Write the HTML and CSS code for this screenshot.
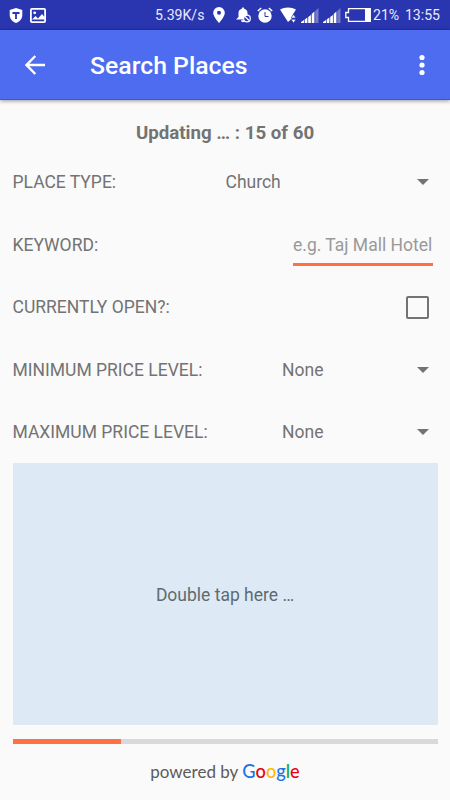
FILE: index.html
```html
<!DOCTYPE html>
<html lang="en">
<head>
    <meta charset="UTF-8">
    <meta name="viewport" content="width=device-width, initial-scale=1.0">
    <title>Search Places</title>
    <link rel="stylesheet" href="styles.css">
</head>
<body>
    <div class="status-bar">
        <div class="notifications">
            <svg width="14" height="15" viewBox="0 0 14 15">
                <path d="M7 0L13.3 2v5c0 4-2.8 6.8-6.3 8C3.500 13.800.7 11 .7 7V2z" fill="#fff"/>
                <path d="M3.500 5h7M7 5v6" stroke="#2a35b0" stroke-width="1.800" fill="none"/>
            </svg>
            <svg width="16" height="15" viewBox="0 0 16 15">
                <rect x=".9" y=".9" width="14.200" height="13.200" rx="1" stroke="#fff" stroke-width="1.800" fill="none"/>
                <circle cx="4.700" cy="4.800" r="1.400" fill="#fff"/>
                <path d="M2 11.500l3.500-3.500 2.500 2.500L12 6l2.500 3v2.500z" fill="#fff"/>
            </svg>
        </div>
        <span class="speed">5.39K/s</span>
        <svg class="pin" width="12" height="16" viewBox="0 0 12 16">
            <path d="M6 0a5.800 5.800 0 0 0-5.800 5.800C.2 10 6 16 6 16s5.800-6 5.800-10.200A5.800 5.800 0 0 0 6 0z" fill="#fff"/>
            <circle cx="6" cy="5.800" r="2" fill="#2a35b0"/>
        </svg>
        <svg class="bell" width="15" height="16" viewBox="0 0 15 16">
            <path d="M7 0.500c.8 0 1.200.5 1.200 1.200C10.500 2.300 11.500 4 11.500 6v4l1.500 2.500H0L2.500 10V6c0-2 1-3.700 3.300-4.300C5.800 1 6.200.5 7 .5zM5 13.200h4a2 2 0 0 1-4 0z" fill="#fff"/>
            <circle cx="11" cy="11.500" r="3.300" fill="#2a35b0" stroke="#fff" stroke-width="1.200"/>
            <path d="M9 9.500l4 4" stroke="#fff" stroke-width="1.200"/>
        </svg>
        <svg class="alarm" width="16" height="16" viewBox="0 0 16 16">
            <circle cx="8" cy="9" r="6.700" fill="#fff"/>
            <path d="M.8 4L4.200 1M15.200 4L11.800 1" stroke="#fff" stroke-width="1.500"/>
            <path d="M8 5v4.500h3.500" stroke="#2a35b0" stroke-width="1" fill="none"/>
        </svg>
        <svg class="wifi" width="17" height="16" viewBox="0 0 17 16">
            <path d="M0 2.500C4.500-.3 11.500-.3 16 2.500L12.500 8v3L8 15z" fill="#fff"/>
            <path d="M11 11l2.500-3.500L16 11zM11 12.300h5L13.500 16z" fill="#fff" stroke="#2a35b0" stroke-width=".6"/>
        </svg>
        <svg class="signal" width="18" height="15" viewBox="0 0 18 15">
            <path d="M0 15v-1l3-2v3zM3.700 15v-3.500l2.700-2V15zM7.200 15V9l2.700-2v8zM10.700 15V6l2.700-2.500V15z" fill="#fff"/>
            <path d="M14.200 15V3L17.500 0v15z" fill="#7379cb"/>
        </svg>
        <svg class="signal" width="18" height="15" viewBox="0 0 18 15">
            <path d="M0 15v-1l3-2v3zM3.700 15v-3.500l2.700-2V15zM7.200 15V9l2.700-2v8zM10.700 15V6l2.700-2.500V15z" fill="#fff"/>
            <path d="M14.200 15V3L17.500 0v15z" fill="#7379cb"/>
        </svg>
        <svg class="battery" width="26" height="14" viewBox="0 0 26 14">
            <path d="M3.500.7h21.800v12.600H3.500V9.500H.8v-5h2.700z" stroke="#fff" stroke-width="1.300" fill="none"/>
            <path d="M20 1h5v12h-5z" fill="#fff"/>
        </svg>
        <span class="percent">21%</span>
        <span class="clock">13:55</span>
    </div>

    <header class="toolbar">
        <svg class="back" width="20" height="20" viewBox="0 0 20 20">
            <path d="M20 10H1.800M10.300 1L1.500 10l8.800 9" stroke="#fff" stroke-width="2.400" fill="none"/>
        </svg>
        <h1>Search Places</h1>
        <svg class="more" width="6" height="22" viewBox="0 0 6 22">
            <circle cx="3" cy="3.500" r="2.600" fill="#fff"/>
            <circle cx="3" cy="11" r="2.600" fill="#fff"/>
            <circle cx="3" cy="18.500" r="2.600" fill="#fff"/>
        </svg>
    </header>

    <main>
        <h2 class="status">Updating … : 15 of 60</h2>

        <div class="row">
            <span class="label">PLACE TYPE:</span>
            <div class="spinner wide"><span>Church</span><i class="arrow"></i></div>
        </div>
        <div class="row">
            <label class="label" for="keyword">KEYWORD:</label>
            <input id="keyword" class="keyword" type="text" placeholder="e.g. Taj Mall Hotel">
        </div>
        <div class="row">
            <label class="label" for="open">CURRENTLY OPEN?:</label>
            <input id="open" class="check" type="checkbox">
        </div>
        <div class="row">
            <span class="label">MINIMUM PRICE LEVEL:</span>
            <div class="spinner"><span>None</span><i class="arrow"></i></div>
        </div>
        <div class="row">
            <span class="label">MAXIMUM PRICE LEVEL:</span>
            <div class="spinner"><span>None</span><i class="arrow"></i></div>
        </div>

        <div class="tap-area">Double tap here …</div>

        <div class="progress"><div class="progress-fill"></div></div>

        <footer>
            <span>powered by</span>
            <span class="google"><b class="blue">G</b><b class="red">o</b><b class="yellow">o</b><b class="blue">g</b><b class="green">l</b><b class="red">e</b></span>
        </footer>
    </main>
</body>
</html>
```
FILE: styles.css
```css
* {
    box-sizing: border-box;
}

body {
    margin: 0;
    height: 800px;
    overflow: hidden;
    font-family: Roboto, sans-serif;
    font-size: 17.5px;
    color: #737373;
    background: #fafafa;
}

svg {
    display: block;
    flex: none;
}

/* Status bar */
.status-bar {
    display: flex;
    align-items: center;
    height: 30px;
    padding: 1px 10px 0 9px;
    color: #e8eafa;
    font-size: 14.1px;
    background: #2a35b0;
    border-bottom: 1px solid #2432a4;
}

.notifications {
    display: flex;
    gap: 7px;
    width: 146px;
}

.speed {
    width: 58px;
}

.bell {
    margin-left: 11px;
}

.alarm {
    margin-left: 6px;
}

.wifi {
    margin-left: 7px;
}

.signal {
    margin-left: 4px;
}

.battery {
    margin-left: 4px;
}

.percent {
    margin-left: 2px;
}

.clock {
    margin-left: auto;
}

/* Toolbar */
.toolbar {
    display: flex;
    align-items: center;
    height: 70px;
    padding: 0 25px;
    background: #4d6cef;
    border-bottom: 1px solid #3159e3;
    box-shadow: 0 1px 4px rgba(0, 0, 0, 0.4);
}

.toolbar h1 {
    margin: 1px 0 0 45px;
    font-size: 24.8px;
    font-weight: 500;
    color: #fff;
}

.more {
    margin-left: auto;
}

/* Search form */
main {
    padding: 0 12.5px;
}

.status {
    margin: 0;
    padding-top: 14px;
    height: 50.5px;
    font-size: 18.7px;
    line-height: 38px;
    text-align: center;
}

.row {
    display: flex;
    align-items: center;
    justify-content: space-between;
    height: 62.5px;
    padding-top: 1px;
}

.spinner {
    display: flex;
    align-items: center;
    justify-content: space-between;
    width: 155.5px;
    padding-right: 9px;
}

.spinner.wide {
    width: 212px;
}

.arrow {
    border: 6px solid transparent;
    border-top-color: #737373;
    border-bottom: 0;
}

.keyword {
    width: 139.5px;
    height: 43px;
    margin: 0 5px 0 0;
    padding: 3px 0 0;
    border: 0;
    border-bottom: 3px solid #ff7043;
    outline: 0;
    font: inherit;
    background: none;
}

.keyword::placeholder {
    color: #999;
}

.check {
    appearance: none;
    width: 23px;
    height: 23px;
    margin: 0 8.5px 0 0;
    border: 2px solid #737373;
    border-radius: 2px;
}

.tap-area {
    display: flex;
    align-items: center;
    justify-content: center;
    height: 262px;
    padding-top: 2px;
    color: #5f6a70;
    background: #ddeaf6;
}

.progress {
    height: 5px;
    margin-top: 14px;
    background: #d9d9d9;
}

.progress-fill {
    width: 25.5%;
    height: 100%;
    background: #ff7043;
}

/* Attribution */
footer {
    display: flex;
    align-items: baseline;
    justify-content: center;
    gap: 4px;
    margin-top: 16px;
    font-family: Lato, sans-serif;
    font-size: 17px;
    color: #5a5a5a;
}

.google {
    font-size: 18.2px;
}

.google b {
    font-weight: 500;
}

.blue { color: #1a73e8; }
.red { color: #e60012; }
.yellow { color: #fbbc05; }
.green { color: #19a63a; }
```
